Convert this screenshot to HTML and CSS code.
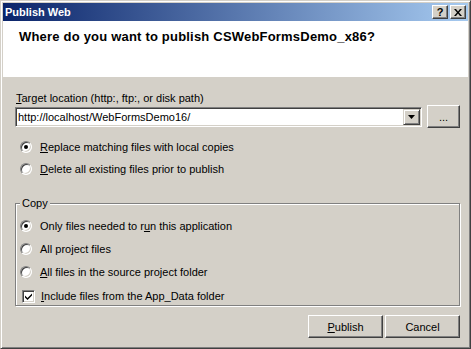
FILE: index.html
```html
<!DOCTYPE html>
<html lang="en">
<head>
  <meta charset="UTF-8" />
  <title>Publish Web</title>
  <link rel="stylesheet" href="styles.css">
</head>
<body>
  <div class="dialog">
    <!-- title bar -->
    <div class="titlebar">
      <span class="title">Publish Web</span>
      <div class="title-buttons">
        <span class="tbtn tbtn-help">?</span>
        <span class="tbtn">
          <svg width="8" height="7" viewBox="0 0 8 7">
            <path d="M0 0h2l2 2.5L6 0h2L5 3.5 8 7H6L4 4.5 2 7H0l3-3.5z" fill="#000"/>
          </svg>
        </span>
      </div>
    </div>

    <!-- header -->
    <div class="header">
      <h1>Where do you want to publish CSWebFormsDemo_x86?</h1>
    </div>

    <div class="content">
      <div class="field-label"><u>T</u>arget location (http:, ftp:, or disk path)</div>
      <div class="location-row">
        <div class="combo">
          <span class="combo-text">http://localhost/WebFormsDemo16/</span>
          <span class="combo-btn">
            <svg width="7" height="4" viewBox="0 0 7 4"><path d="M0 0h7L3.5 4z" fill="#000"/></svg>
          </span>
        </div>
        <button class="btn btn-browse">...</button>
      </div>

      <div class="options">
        <div class="option"><span class="radio checked"></span><span><u>R</u>eplace matching files with local copies</span></div>
        <div class="option"><span class="radio"></span><span><u>D</u>elete all existing files prior to publish</span></div>
      </div>

      <!-- copy group -->
      <fieldset class="group">
        <legend>Copy</legend>
        <div class="option"><span class="radio checked"></span><span>Only files needed to r<u>u</u>n this application</span></div>
        <div class="option"><span class="radio"></span><span>All pro<u>j</u>ect files</span></div>
        <div class="option"><span class="radio"></span><span><u>A</u>ll files in the source project folder</span></div>
        <div class="option option-check">
          <span class="checkbox">
            <svg width="7" height="7" viewBox="0 0 7 7"><path d="M0 2.5l2.5 2.5L7 0.5v2L2.5 7 0 4.5z" fill="#000"/></svg>
          </span>
          <span><u>I</u>nclude files from the App_Data folder</span>
        </div>
      </fieldset>

      <div class="actions">
        <button class="btn"><u>P</u>ublish</button>
        <button class="btn">Cancel</button>
      </div>
    </div>
  </div>
</body>
</html>
```

FILE: styles.css
```css
body {
  margin: 0;
  background: #d4d0c8;
  font-family: 'Liberation Sans', Arial, sans-serif;
  font-size: 11px;
  color: #000;
}
u {
  text-decoration: underline;
  text-underline-offset: 1px;
}

/* === window frame === */
.dialog {
  width: 471px;
  height: 349px;
  box-sizing: border-box;
  display: flex;
  flex-direction: column;
  background: #d4d0c8;
  border: 1px solid;
  border-color: #d4d0c8 #404040 #404040 #d4d0c8;
  box-shadow: inset 1px 1px 0 #fff, inset -1px -1px 0 #808080;
  padding: 2px;
}

/* === title bar === */
.titlebar {
  height: 18px;
  display: flex;
  align-items: center;
  justify-content: space-between;
  padding: 0 2px 0 2px;
  background: linear-gradient(to right, #0a246a, #a6caf0);
}
.title {
  color: #fff;
  font-weight: bold;
  font-size: 11px;
}
.title-buttons {
  display: flex;
  gap: 2px;
}
.tbtn {
  width: 16px;
  height: 14px;
  box-sizing: border-box;
  display: flex;
  align-items: center;
  justify-content: center;
  background: #d4d0c8;
  border: 1px solid;
  border-color: #fff #404040 #404040 #fff;
  box-shadow: inset -1px -1px 0 #808080;
  font-weight: bold;
  font-size: 11px;
  line-height: 1;
}

/* === header === */
.header {
  height: 56px;
  background: #fff;
  padding: 8px 0 0 16px;
  box-sizing: border-box;
}
.header h1 {
  margin: 0;
  font-size: 13px;
  line-height: 16px;
  font-weight: bold;
  letter-spacing: 0.2px;
}

/* === content === */
.content {
  flex: 1;
  padding: 0 8px 0 12px;
  display: flex;
  flex-direction: column;
}
.field-label {
  margin-top: 15px;
  line-height: 13px;
  padding-left: 1px;
}
.location-row {
  display: flex;
  align-items: center;
  gap: 5px;
}
.combo {
  flex: 1;
  height: 20px;
  box-sizing: border-box;
  display: flex;
  align-items: center;
  background: #fff;
  border: 1px solid;
  border-color: #808080 #fff #fff #808080;
  box-shadow: inset 1px 1px 0 #404040, inset -1px -1px 0 #d4d0c8;
  padding: 1px 1px 1px 2px;
}
.combo-text {
  flex: 1;
}
.combo-btn {
  width: 17px;
  height: 16px;
  box-sizing: border-box;
  display: flex;
  align-items: center;
  justify-content: center;
  background: #d4d0c8;
  border: 1px solid;
  border-color: #d4d0c8 #404040 #404040 #d4d0c8;
  box-shadow: inset 1px 1px 0 #fff, inset -1px -1px 0 #808080;
}

/* === buttons === */
.btn {
  font-family: inherit;
  font-size: 11px;
  color: #000;
  width: 75px;
  height: 23px;
  padding: 0;
  background: #d4d0c8;
  border: 1px solid;
  border-color: #fff #404040 #404040 #fff;
  box-shadow: inset -1px -1px 0 #808080;
}
.btn-browse {
  width: 33px;
}

/* === radios and checkbox === */
.options {
  margin-top: 8px;
  padding-left: 5px;
}
.option {
  height: 22px;
  display: flex;
  align-items: center;
  gap: 8px;
}
.radio {
  width: 12px;
  height: 12px;
  box-sizing: border-box;
  border-radius: 50%;
  background: #fff;
  border: 1px solid;
  border-color: #808080 #fff #fff #808080;
  box-shadow: inset 1px 1px 0 #404040, inset -1px -1px 0 #d4d0c8;
  display: flex;
  align-items: center;
  justify-content: center;
}
.radio.checked::after {
  content: "";
  width: 4px;
  height: 4px;
  border-radius: 50%;
  background: #000;
}
.checkbox {
  width: 13px;
  height: 13px;
  box-sizing: border-box;
  margin-left: 2px;
  background: #fff;
  border: 1px solid;
  border-color: #808080 #fff #fff #808080;
  box-shadow: inset 1px 1px 0 #404040, inset -1px -1px 0 #d4d0c8;
  display: flex;
  align-items: center;
  justify-content: center;
}

/* === copy group === */
.group {
  margin: 17px 0 0 0;
  padding: 4px 0 0 4px;
  border: 1px solid #808080;
  box-shadow: inset 1px 1px 0 #fff, 1px 1px 0 #fff;
}
.group legend {
  padding: 0 2px;
  line-height: 13px;
  background: #d4d0c8;
}
.group .option {
  height: 23px;
}
.group .option-check {
  height: 18px;
  margin-top: 4px;
  gap: 6px;
}

.actions {
  margin-top: 9px;
  display: flex;
  justify-content: flex-end;
  gap: 2px;
}
```
